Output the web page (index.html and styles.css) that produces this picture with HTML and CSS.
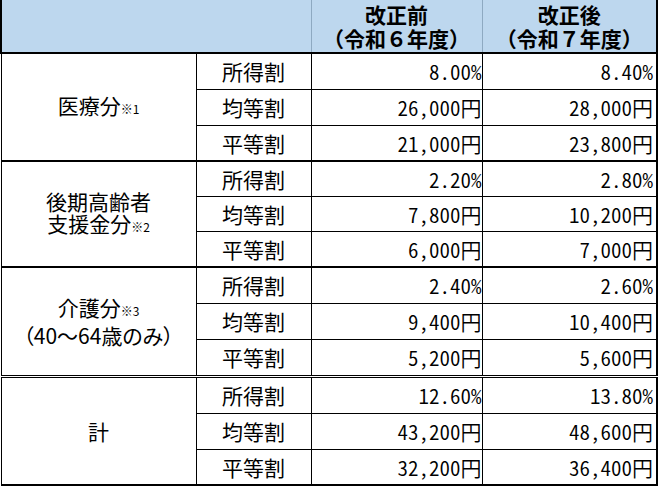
FILE: index.html
```html
<!DOCTYPE html>
<html lang="ja">
<head>
<meta charset="utf-8">
<link rel="stylesheet" href="styles.css">
</head>
<body>
<table class="rates">
  <colgroup>
    <col class="c-cat">
    <col class="c-type">
    <col class="c-val">
    <col class="c-val2">
  </colgroup>
  <thead>
    <tr class="head">
      <th colspan="2" class="blank"></th>
      <th class="hcol">改正前<br>（令和６年度）</th>
      <th class="hcol">改正後<br>（令和７年度）</th>
    </tr>
  </thead>
  <tbody class="sec">
    <tr>
      <td rowspan="3" class="cat">医療分<span class="note">※1</span></td>
      <td class="type">所得割</td>
      <td class="num">8.00%</td>
      <td class="num">8.40%</td>
    </tr>
    <tr>
      <td class="type">均等割</td>
      <td class="num">26,000円</td>
      <td class="num">28,000円</td>
    </tr>
    <tr>
      <td class="type">平等割</td>
      <td class="num">21,000円</td>
      <td class="num">23,800円</td>
    </tr>
  </tbody>
  <tbody class="sec sec-short">
    <tr>
      <td rowspan="3" class="cat">後期高齢者<br>支援金分<span class="note">※2</span></td>
      <td class="type">所得割</td>
      <td class="num">2.20%</td>
      <td class="num">2.80%</td>
    </tr>
    <tr>
      <td class="type">均等割</td>
      <td class="num">7,800円</td>
      <td class="num">10,200円</td>
    </tr>
    <tr>
      <td class="type">平等割</td>
      <td class="num">6,000円</td>
      <td class="num">7,000円</td>
    </tr>
  </tbody>
  <tbody class="sec sec-last">
    <tr>
      <td rowspan="3" class="cat cat-care">介護分<span class="note">※3</span><br><span class="prop">（40～64歳のみ）</span></td>
      <td class="type">所得割</td>
      <td class="num">2.40%</td>
      <td class="num">2.60%</td>
    </tr>
    <tr>
      <td class="type">均等割</td>
      <td class="num">9,400円</td>
      <td class="num">10,400円</td>
    </tr>
    <tr>
      <td class="type">平等割</td>
      <td class="num">5,200円</td>
      <td class="num">5,600円</td>
    </tr>
  </tbody>
  <tbody class="sec total">
    <tr>
      <td rowspan="3" class="cat">計</td>
      <td class="type">所得割</td>
      <td class="num">12.60%</td>
      <td class="num">13.80%</td>
    </tr>
    <tr>
      <td class="type">均等割</td>
      <td class="num">43,200円</td>
      <td class="num">48,600円</td>
    </tr>
    <tr>
      <td class="type">平等割</td>
      <td class="num">32,200円</td>
      <td class="num">36,400円</td>
    </tr>
  </tbody>
</table>
</body>
</html>
```

FILE: styles.css
```css
html, body {
  margin: 0;
  padding: 0;
  background: #ffffff;
}

body {
  font-family: "Noto Sans CJK JP", "Noto Sans", sans-serif;
  color: #000000;
}

.rates {
  border-collapse: collapse;
  table-layout: fixed;
  width: 656px;
  font-size: 21px;
  line-height: 22px;
}

.c-cat { width: 195px; }
.c-type { width: 115px; }
.c-val { width: 171px; }
.c-val2 { width: 175px; }

.rates th,
.rates td {
  padding: 0;
  border: 1px solid #000000;
}

.head {
  height: 53px;
}

.head th {
  background: #bdd7ee;
  border-top: none;
  border-bottom: 2px solid #000000;
  border-left: 1px solid #8ea9c1;
  border-right: 1px solid #8ea9c1;
  font-weight: bold;
  text-align: center;
  vertical-align: middle;
  line-height: 24px;
  padding-top: 0;
}

.head th.blank {
  border-left: 2px solid #000000;
}

.head th.hcol:first-of-type {
  border-left: 2px solid #000000;
}

.head th:last-child {
  border-right: 2px solid #000000;
}

.rates tbody tr {
  height: 36px;
}

.rates .sec-short tr:first-child,
.rates .sec-short tr:nth-child(2) {
  height: 35px;
}

.rates .sec-last tr:last-child,
.rates .total tr:first-child {
  height: 37px;
}

.rates td {
  vertical-align: middle;
}

.cat {
  text-align: center;
  border-left: 2px solid #000000;
  line-height: 22px;
}

.cat-care {
  line-height: 25px;
}

.type {
  text-align: center;
  border-right: 2px solid #000000;
}

.num {
  text-align: right;
  padding-right: 6px;
  font-feature-settings: "hwid";
  font-weight: 350;
}

.rates td.num:last-child {
  border-right: 2px solid #000000;
  padding-right: 3px;
}

.sec tr:first-child td {
  border-top: 2px solid #000000;
}

.sec-last tr:last-child td,
.sec-last td.cat {
  border-bottom: 3px double #000000;
}

.total tr:first-child td {
  border-top: 3px double #000000;
}

.total tr:last-child td,
.total td.cat {
  border-bottom: 2px solid #000000;
}

.note {
  font-size: 12px;
}

.prop {
  font-feature-settings: "palt";
}
```
